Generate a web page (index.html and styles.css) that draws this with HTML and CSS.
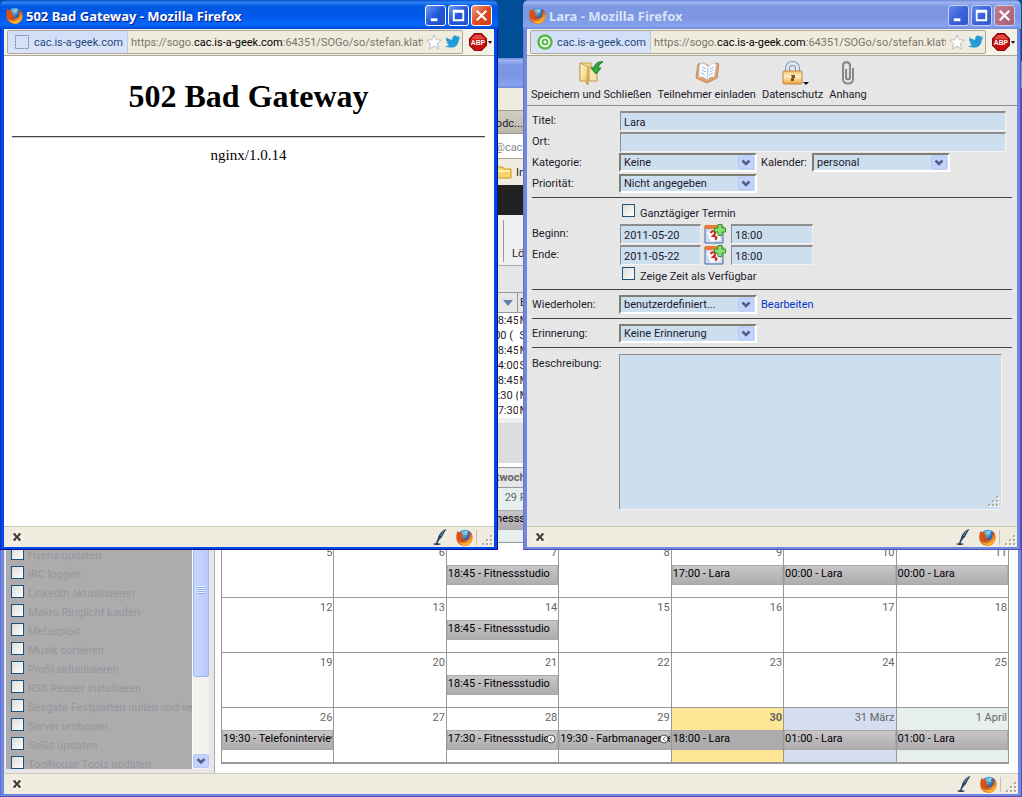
FILE: index.html
```html
<!DOCTYPE html>
<html lang="de">
<head>
<meta charset="utf-8">
<title>Lara - Mozilla Firefox</title>
<link rel="stylesheet" href="styles.css">
</head>
<body>
<svg class="defs" aria-hidden="true">
  <defs>
    <radialGradient id="globe" cx=".4" cy=".25" r=".8"><stop offset="0" stop-color="#7fd0f5"/><stop offset=".5" stop-color="#2268b5"/><stop offset="1" stop-color="#0b2868"/></radialGradient>
    <linearGradient id="fur" x1="0" y1="0" x2="1" y2="1"><stop offset="0" stop-color="#d9581a"/><stop offset=".5" stop-color="#d64c14"/><stop offset=".8" stop-color="#f9a52c"/><stop offset="1" stop-color="#b93c10"/></linearGradient>
    <linearGradient id="gold" x1="0" y1="0" x2="1" y2="1"><stop offset="0" stop-color="#fffbe0"/><stop offset=".6" stop-color="#f3d98c"/><stop offset="1" stop-color="#cf9a3c"/></linearGradient>
    <linearGradient id="lockfill" x1="0" y1="0" x2="0" y2="1"><stop offset="0" stop-color="#f4bd68"/><stop offset=".4" stop-color="#fff0c8"/><stop offset="1" stop-color="#eda136"/></linearGradient>
  </defs>
  <symbol id="firefox" viewBox="0 0 16 16">
    <circle cx="8.3" cy="7.6" r="7" fill="url(#globe)"/>
    <path d="M8 2.2c1.500-.8 3-.4 3.600.4l-1.600.8.8 1.400-2 .8z" fill="#8fd2ee"/>
    <path d="M1.500 1.500c.3 1 .8 1.400 1.400 1.700C4 2.400 5 2.500 5.800 2.800 5.200 3.500 5 4.200 5.200 4.800l1.900.3c.1.800-1.200 1.100-1.500 1.600.1 1 .7 1.400 1.600 1.500.9 0 1.600-.6 2.300-.1-.7 1.700-3 2.400-4.500 1.200 1.900 2.500 6.300 2 7.300-1.300.5-1.700.1-3.300-.5-4.400.9.500 1.400 1.200 1.700 2-.1-1.800-.9-3-1.700-3.900 2.600 1.300 4 4 3.900 6.700C15.500 12.700 12.400 16 8.200 16 3.900 16 .4 12.800.3 8.500.2 5.900.6 3.500 1.500 1.500z" fill="url(#fur)"/>
    <path d="M1.300 9.500c1.200 3.500 4.700 4.800 8 4 2-.5 3.600-1.800 4.300-3.600-.2 3-2.700 5-5.700 5-3.400 0-5.900-2.200-6.600-5.400z" fill="#ffc637"/>
  </symbol>
  <symbol id="minimize" viewBox="0 0 20 20"><path d="M5 13h7v3H5z" fill="#fff"/></symbol>
  <symbol id="maximize" viewBox="0 0 20 20"><path d="M4 4h12v12H4zM6 7v7h8V7z" fill="#fff" fill-rule="evenodd"/></symbol>
  <symbol id="close" viewBox="0 0 20 20"><path d="M5 5l10 10M15 5L5 15" stroke="#fff" stroke-width="2.300"/></symbol>
  <symbol id="star" viewBox="0 0 16 16"><path d="M8 .8l2.100 4.900 5.300.5-4 3.500 1.200 5.300L8 12.200 3.400 15l1.200-5.300-4-3.500 5.300-.5z" fill="#fff" stroke="#bdbdbd"/></symbol>
  <symbol id="bird" viewBox="0 0 16 14"><path d="M1 2c2 2 4 2.700 6.200 2.700C7 1.600 9 .2 11 .7c1 .2 1.500.7 1.900 1.100l2.200-.7-1.300 2 1.700-.2-1.700 1.800c0 4-2.900 7.900-7.200 7.900C4 12.600 2 12 0 11c2 0 3.200-.5 4.300-1.300C2.800 9.400 2 8.600 1.700 7.500h1.500C1.500 6.500.9 5.200 1 3.900l1.200.3C1.100 3.500.8 2.700 1 2z" fill="#239bd3"/></symbol>
  <symbol id="abp" viewBox="0 0 16 16"><path d="M5 .5h6L15.500 5v6L11 15.500H5L.5 11V5z" fill="#c70d0d" stroke="#8c0c0c"/><path d="M5.500 1.500h5l4 4h-13z" fill="#e04b45"/><text x="8" y="11" text-anchor="middle" class="abp-text">ABP</text></symbol>
  <symbol id="arrow" viewBox="0 0 16 14"><rect x=".5" y=".5" width="15" height="13" rx="1.500" fill="#c3d3fd" stroke="#b3c8f8"/><path d="M4.500 5L8 8.500 11.500 5" fill="none" stroke="#4d6185" stroke-width="2.500"/></symbol>
  <symbol id="cross" viewBox="0 0 16 16"><circle cx="8" cy="8" r="7" fill="#f6eee4"/><path d="M5 5l6 6M11 5l-6 6" stroke="#3b3b33" stroke-width="1.800"/><path d="M4 5h3M9 5h3M4 11h3M9 11h3" stroke="#3b3b33"/></symbol>
  <symbol id="pen" viewBox="0 0 16 18"><path d="M14.500 1C10 2 7 6 6 10l-2 5h1.500l2-3.500L10 9l2-4z" fill="#23405c"/><path d="M8.500 8l3-5" stroke="#7295b2"/><path d="M1 16c3-1.500 5-1 8 0-2 1.300-6 1.300-8 0z" fill="#23405c"/></symbol>
  <symbol id="grip" viewBox="0 0 12 12"><path d="M9 1h2v2H9zM9 5h2v2H9zM5 5h2v2H5zM9 9h2v2H9zM5 9h2v2H5zM1 9h2v2H1z" fill="#fff"/><path d="M8 0h2v2H8zM8 4h2v2H8zM4 4h2v2H4zM8 8h2v2H8zM4 8h2v2H4zM0 8h2v2H0z" fill="#b0ab9a"/></symbol>
  <symbol id="dategrid" viewBox="0 0 22 20"><path d="M1 2h18v17H1z" fill="#d3daf0" stroke="#4169a8"/><path d="M1 1h18v4H1z" fill="#ef7a33"/><path d="M3 8l10-2 4 10-10 2z" fill="#fff"/><path d="M6.500 9c2-3 6-1.500 4.500 1l-2 2c3 0 5 2 2 3.500" fill="none" stroke="#d3201d" stroke-width="2"/><path d="M14 .5h4V4h3.500v4H18v3.500h-4V8h-3.500V4H14z" fill="#8ddd70" stroke="#259832"/></symbol>
  <symbol id="clock" viewBox="0 0 10 10"><circle cx="5" cy="5" r="4" fill="#fff" stroke="#555"/><path d="M6.500 3L4 5l2.500 2" fill="none" stroke="#777"/></symbol>
</svg>

<div class="desktop">

<section class="window main-window">
  <div class="titlebar main-title"></div>
  <div class="main-body">
    <div class="browser-top">
      <div class="menu-strip"></div>
      <div class="tab-strip"><span class="tab">Podc...</span></div>
      <div class="address-strip"><span>@cac.</span></div>
      <div class="bookmark-strip"><svg width="16" height="14" viewBox="0 0 16 14"><path d="M1 2h6l1 2h7v9H1z" fill="#f6d66b" stroke="#c99b28"/><path d="M2 5h12v2H2z" fill="#fff0aa"/></svg><span>In</span></div>
      <div class="black-strip"></div>
    </div>
    <div class="workspace">
      <aside class="sidebar">
        <ul class="tasks">
          <li><input type="checkbox" id="t1"><label for="t1">Hyena updaten</label></li>
          <li><input type="checkbox" id="t2"><label for="t2">IRC loggen</label></li>
          <li><input type="checkbox" id="t3"><label for="t3">LinkedIn aktualisieren</label></li>
          <li><input type="checkbox" id="t4"><label for="t4">Makro Ringlicht kaufen</label></li>
          <li><input type="checkbox" id="t5"><label for="t5">Metasploit</label></li>
          <li><input type="checkbox" id="t6"><label for="t6">Musik sortieren</label></li>
          <li><input type="checkbox" id="t7"><label for="t7">Profil aktualisieren</label></li>
          <li><input type="checkbox" id="t8"><label for="t8">RSS Reader installieren</label></li>
          <li><input type="checkbox" id="t9"><label for="t9">Seagate Festplatten nullen und verkaufen</label></li>
          <li><input type="checkbox" id="t10"><label for="t10">Server umbauen</label></li>
          <li><input type="checkbox" id="t11"><label for="t11">SoGo updaten</label></li>
          <li><input type="checkbox" id="t12"><label for="t12">Toolhouse Tools updaten</label></li>
        </ul>
        <div class="scrollbar">
          <div class="thumb"><i></i></div>
          <button class="scroll-down" aria-label="Nach unten"><svg width="16" height="16" viewBox="0 0 16 14"><use href="#arrow"/></svg></button>
        </div>
      </aside>
      <main class="content">
        <div class="tools"><button class="delete"><svg width="24" height="24" viewBox="0 0 24 24"><path d="M6 6l12 12M18 6L6 18" stroke="#d3201d" stroke-width="4"/></svg>Löschen</button></div>
        <div class="filter"></div>
        <table class="events">
          <thead><tr><th><svg width="10" height="6" viewBox="0 0 10 6"><path d="M0 0h10L5 6z" fill="#5d83ae"/></svg></th><th>E</th></tr></thead>
          <tbody>
            <tr><td>18:45</td><td>M</td></tr>
            <tr><td>:00 (</td><td>S</td></tr>
            <tr><td>18:45</td><td>M</td></tr>
            <tr><td>14:00</td><td>S</td></tr>
            <tr><td>18:45</td><td>M</td></tr>
            <tr><td>7:30 (</td><td>M</td></tr>
            <tr><td>17:30</td><td>M</td></tr>
          </tbody>
        </table>
        <div class="view-switch"></div>
        <table class="month">
          <thead><tr><th></th><th></th><th>Mittwoch</th><th></th><th></th><th></th><th></th></tr></thead>
          <tbody>
            <tr><td></td><td></td><td class="other"><b class="day">29 Februar</b><span class="event">18:45 - Fitnessstudio</span></td><td></td><td></td><td></td><td></td></tr>
            <tr><td><b class="day">5</b></td><td><b class="day">6</b></td><td><b class="day">7</b><span class="event">18:45 - Fitnessstudio</span></td><td><b class="day">8</b></td><td><b class="day">9</b><span class="event">17:00 - Lara</span></td><td><b class="day">10</b><span class="event">00:00 - Lara</span></td><td><b class="day">11</b><span class="event">00:00 - Lara</span></td></tr>
            <tr><td><b class="day">12</b></td><td><b class="day">13</b></td><td><b class="day">14</b><span class="event">18:45 - Fitnessstudio</span></td><td><b class="day">15</b></td><td><b class="day">16</b></td><td><b class="day">17</b></td><td><b class="day">18</b></td></tr>
            <tr><td><b class="day">19</b></td><td><b class="day">20</b></td><td><b class="day">21</b><span class="event">18:45 - Fitnessstudio</span></td><td><b class="day">22</b></td><td><b class="day">23</b></td><td><b class="day">24</b></td><td><b class="day">25</b></td></tr>
            <tr><td><b class="day">26</b><span class="event">19:30 - Telefoninterview</span></td><td><b class="day">27</b></td><td><b class="day">28</b><span class="event">17:30 - Fitnessstudio<svg class="clock"><use href="#clock"/></svg></span></td><td><b class="day">29</b><span class="event">19:30 - Farbmanagement<svg class="clock"><use href="#clock"/></svg></span></td><td class="today"><b class="day">30</b><span class="event plain">18:00 - Lara</span></td><td class="selected"><b class="day">31 März</b><span class="event">01:00 - Lara</span></td><td class="other"><b class="day">1 April</b><span class="event">01:00 - Lara</span></td></tr>
          </tbody>
        </table>
      </main>
    </div>
    <footer class="status"><button aria-label="Schließen"><svg width="16" height="16"><use href="#cross"/></svg></button><span class="spacer"></span><svg width="16" height="18"><use href="#pen"/></svg><svg class="fox" width="17" height="17"><use href="#firefox"/></svg><i class="divider"></i><svg class="grip"><use href="#grip"/></svg></footer>
  </div>
</section>

<section class="window active gateway">
  <header class="titlebar"><svg width="17" height="17"><use href="#firefox"/></svg><span class="title">502 Bad Gateway - Mozilla Firefox</span><button class="caption" aria-label="Minimieren"><svg><use href="#minimize"/></svg></button><button class="caption" aria-label="Maximieren"><svg><use href="#maximize"/></svg></button><button class="caption shut" aria-label="Schließen"><svg><use href="#close"/></svg></button></header>
  <div class="window-body">
    <div class="navbar">
      <div class="address"><button class="identity"><svg width="16" height="16" viewBox="0 0 16 16"><path d="M1.500 1.500h13v13h-13z" fill="none" stroke="#7185a3" stroke-dasharray="2 1"/></svg>cac.is-a-geek.com</button><div class="url" role="textbox">https://sogo.<b>cac.is-a-geek.com</b>:64351/SOGo/so/stefan.klattenhoff</div><svg width="16" height="16"><use href="#star"/></svg><svg width="16" height="14"><use href="#bird"/></svg></div>
      <button class="abp" aria-label="Adblock Plus"><svg width="18" height="18"><use href="#abp"/></svg><i></i></button>
    </div>
    <div class="error-page"><h1>502 Bad Gateway</h1><hr><p>nginx/1.0.14</p></div>
    <footer class="status"><button aria-label="Schließen"><svg width="16" height="16"><use href="#cross"/></svg></button><span class="spacer"></span><svg width="16" height="18"><use href="#pen"/></svg><svg class="fox" width="17" height="17"><use href="#firefox"/></svg><i class="divider"></i><svg class="grip"><use href="#grip"/></svg></footer>
  </div>
</section>

<section class="window editor">
  <header class="titlebar"><svg width="17" height="17"><use href="#firefox"/></svg><span class="title">Lara - Mozilla Firefox</span><button class="caption" aria-label="Minimieren"><svg><use href="#minimize"/></svg></button><button class="caption" aria-label="Maximieren"><svg><use href="#maximize"/></svg></button><button class="caption shut" aria-label="Schließen"><svg><use href="#close"/></svg></button></header>
  <div class="window-body">
    <div class="navbar">
      <div class="address"><button class="identity"><svg width="16" height="16" viewBox="0 0 16 16"><circle cx="8" cy="8" r="6.500" fill="#fff" stroke="#5aba47" stroke-width="2.500"/><circle cx="8" cy="8" r="2.500" fill="#fff" stroke="#5aba47" stroke-width="2"/></svg>cac.is-a-geek.com</button><div class="url" role="textbox">https://sogo.<b>cac.is-a-geek.com</b>:64351/SOGo/so/stefan.klattenhoff</div><svg width="16" height="16"><use href="#star"/></svg><svg width="16" height="14"><use href="#bird"/></svg></div>
      <button class="abp" aria-label="Adblock Plus"><svg width="18" height="18"><use href="#abp"/></svg><i></i></button>
    </div>
    <div class="toolbar">
      <button><svg viewBox="0 0 24 24"><path d="M1 2h11v17H1z" fill="#f4d88c" stroke="#d0a050"/><path d="M10 6h8v14h-8z" fill="#f7e5af" stroke="#c4944a"/><path d="M1 2l8 4v18l-3-4H1z" fill="url(#gold)" stroke="#c89a48"/><path d="M24 1c-5-1-8 2-9 6h-3l5 6 5-6h-3c1-3 2-5 5-6z" fill="#34aa40" stroke="#168027"/></svg>Speichern und Schließen</button>
      <button><svg viewBox="0 0 24 24"><path d="M3 3L1 17l11 5 10-5 2-14-4-1-6 3-6-3z" fill="#dfa06a" stroke="#c88a5c"/><path d="M5 3c3-1 6 0 8 3 3-3 5-4 8-3l-2 13c-3-1-5 0-7 3-2-3-5-4-8-3z" fill="#fff" stroke="#d4e2ee"/><path d="M7 6l4 2M7 9l4 2M6 12l4 2M15 8l4-2M15 11l3-2M14 14l4-2" stroke="#8db4dd"/><path d="M13 6l-1 13" stroke="#a9bfd5"/></svg>Teilnehmer einladen</button>
      <button class="has-menu"><svg viewBox="0 0 24 24"><path d="M6.500 12V7c0-6 10-6 10 0v5" fill="none" stroke="#8295ab" stroke-width="5"/><path d="M6.500 12V7c0-6 10-6 10 0v5" fill="none" stroke="#dce7f1" stroke-width="3"/><rect x="2" y="10" width="19" height="13" rx="1" fill="url(#lockfill)" stroke="#be8749"/><path d="M10 14h4v3h-1v3h-3v-3h1z" fill="#805223"/></svg><i></i>Datenschutz</button>
      <button><svg viewBox="0 0 24 24"><path d="M10 8v8c0 3 4 3 4 0V5c0-5-7-5-7 0v13c0 6 10 6 10 0V7" fill="none" stroke="#666" stroke-width="2"/><path d="M10 8v8c0 3 4 3 4 0V5c0-5-7-5-7 0v13c0 6 10 6 10 0V7" fill="none" stroke="#aaa" stroke-width="1"/></svg>Anhang</button>
    </div>
    <form class="form">
      <div class="group">
        <div class="row"><label for="titel">Titel:</label><input class="field wide" id="titel" value="Lara"></div>
        <div class="row"><label for="ort">Ort:</label><input class="field wide" id="ort"></div>
        <div class="row"><label for="kat">Kategorie:</label><span class="select"><select id="kat"><option>Keine</option></select><svg><use href="#arrow"/></svg></span><label class="side" for="kal">Kalender:</label><span class="select"><select id="kal"><option>personal</option></select><svg><use href="#arrow"/></svg></span></div>
        <div class="row"><label for="prio">Priorität:</label><span class="select"><select id="prio"><option>Nicht angegeben</option></select><svg><use href="#arrow"/></svg></span></div>
      </div>
      <div class="group dates">
        <div class="row check"><input type="checkbox" id="ganz"><label for="ganz">Ganztägiger Termin</label></div>
        <div class="row"><label for="beginn">Beginn:</label><input class="field date" id="beginn" value="2011-05-20"><button type="button" class="pickdate" aria-label="Datum wählen"><svg width="22" height="20"><use href="#dategrid"/></svg></button><input class="field time" aria-label="Beginn Uhrzeit" value="18:00"></div>
        <div class="row"><label for="ende">Ende:</label><input class="field date" id="ende" value="2011-05-22"><button type="button" class="pickdate" aria-label="Datum wählen"><svg width="22" height="20"><use href="#dategrid"/></svg></button><input class="field time" aria-label="Ende Uhrzeit" value="18:00"></div>
        <div class="row check"><input type="checkbox" id="frei"><label for="frei">Zeige Zeit als Verfügbar</label></div>
      </div>
      <div class="group single"><div class="row"><label for="wdh">Wiederholen:</label><span class="select"><select id="wdh"><option>benutzerdefiniert...</option></select><svg><use href="#arrow"/></svg></span><a class="side" href="#">Bearbeiten</a></div></div>
      <div class="group single"><div class="row"><label for="eri">Erinnerung:</label><span class="select"><select id="eri"><option>Keine Erinnerung</option></select><svg><use href="#arrow"/></svg></span></div></div>
      <div class="row description"><label for="text">Beschreibung:</label><div class="area"><textarea id="text"></textarea><svg class="grip"><use href="#grip"/></svg></div></div>
    </form>
    <footer class="status"><button aria-label="Schließen"><svg width="16" height="16"><use href="#cross"/></svg></button><span class="spacer"></span><svg width="16" height="18"><use href="#pen"/></svg><svg class="fox" width="17" height="17"><use href="#firefox"/></svg><i class="divider"></i><svg class="grip"><use href="#grip"/></svg></footer>
  </div>
</section>
</div>
</body>
</html>
```

FILE: styles.css
```css
* { box-sizing: border-box; }
body, button, input, select, textarea { font: 11px/15px Roboto, "Noto Sans", sans-serif; color: #1c1c2c; }
body { margin: 0; }
button { padding: 0; border: 0; background: none; }
svg { display: block; flex: none; }
.defs { position: absolute; width: 0; height: 0; }
.desktop { position: relative; min-height: 100vh; overflow: hidden; background: #004e98; }

/* Window frames */
.window { position: absolute; display: flex; flex-direction: column; padding: 0 4px 3px; background: #7088dd; box-shadow: inset -1px -1px #5050b8, inset 1px 0 #6574cf; border-radius: 6px 6px 0 0; }
.active { background: #0048e8; box-shadow: inset -1px -1px #00138c, inset 1px 0 #0030c8; }
.main-window { top: 58px; left: 0; right: 0; bottom: 0; }
.gateway { top: 0; left: 0; width: 498px; height: 550px; }
.editor { top: 0; left: 523px; width: 498px; height: 550px; }
.titlebar { display: flex; align-items: center; flex: none; gap: 2px; height: 29px; padding: 2px 6px 0; margin: 0 -4px; color: #d8e4f8; border-radius: 6px 6px 0 0; background: linear-gradient(#6f86db, #9eb5f2 8%, #7d97e2 22%, #7c96e2 60%, #86a3ee 90%, #7089da); }
.active .titlebar { color: #fff; background: linear-gradient(#0a4fc4, #2b83f8 8%, #0058e0 22%, #0059ea 55%, #0567fc 85%, #0046d0); }
.title { flex: 1; margin-left: 1px; font: bold 13px/18px "Noto Sans", sans-serif; white-space: nowrap; }
.active .title { text-shadow: 1px 1px #0a1883; }
.caption { width: 21px; height: 21px; border: 1px solid #c4d0f5; border-radius: 3px; background: linear-gradient(135deg, #6489ea, #3b63d8 50%, #3158c8); }
.caption svg { width: 19px; height: 19px; }
.active .caption { border-color: #fff; background: linear-gradient(135deg, #6c9af5, #2357da 50%, #2050cc); }
.caption.shut { background: linear-gradient(135deg, #c0808c, #a85c70); }
.active .caption.shut { background: linear-gradient(135deg, #f09a7c, #e04a23 50%, #cf3c15); }
.window-body, .main-body { display: flex; flex: 1; flex-direction: column; min-height: 0; background: #fff; }
.editor .window-body { background: #e6e6e6; }

/* Address bar */
.navbar { display: flex; align-items: center; flex: none; height: 27px; padding: 0 3px; background: #f4f1e7; border-bottom: 1px solid #aaa797; }
.address { display: flex; align-items: center; flex: 1; gap: 3px; min-width: 0; height: 24px; padding-right: 1px; border: 1px solid #aca899; border-radius: 2px; background: #efebde; }
.identity { display: flex; align-items: center; flex: none; gap: 4px; width: 120px; height: 22px; padding-left: 6px; color: #234a7d; background: linear-gradient(#cfdef7, #dbe4f8); border-right: 1px solid #b9c9e8; }
.url { flex: 1; min-width: 0; overflow: hidden; color: #777668; white-space: nowrap; }
.url b { font-weight: normal; color: #000; }
.abp { display: flex; align-items: center; gap: 1px; width: 28px; padding-left: 6px; }
.abp-text { font: bold 6px "Liberation Sans", sans-serif; fill: #fff; }
.abp i, .has-menu i { border: 2px solid transparent; border-top: 3px solid #111; border-bottom: 0; }

.status { display: flex; align-items: center; flex: none; height: 21px; padding-left: 5px; background: #efebde; border-top: 1px solid #cfcab8; }
.spacer { flex: 1; }
.status .fox { margin-left: 8px; }
.divider { width: 1px; height: 15px; margin: 0 5px 0 3px; background: #c8c4b4; }
.grip { width: 12px; height: 12px; align-self: flex-end; }

/* Gateway error */
.error-page { flex: 1; padding: 21px 9px 0 8px; text-align: center; color: #000; font: 16px/19px "Liberation Serif", serif; }
.error-page h1 { margin: 0; font-size: 32px; line-height: 39px; }
.error-page hr { height: 2px; margin: 20px 0 8px; border: 0; border-top: 1px solid #444; border-bottom: 1px solid #ccc; }
.error-page p { margin: 0; font-size: 15px; }

/* Appointment editor */
.toolbar { display: flex; flex: none; gap: 6px; height: 50px; padding: 5px 4px 0; border-bottom: 1px solid #8e8e8e; }
.toolbar button { position: relative; display: flex; flex-direction: column; align-items: center; gap: 2px; white-space: nowrap; }
.toolbar svg { width: 24px; height: 24px; }
.has-menu i { position: absolute; top: 21px; right: 14px; border-width: 3px 3px 0; }
.form { flex: 1; padding: 4px 5px 0; }
.group { padding-bottom: 3px; border-bottom: 1px solid #444; }
.row { display: flex; align-items: center; height: 21px; }
.row > label:first-child { width: 88px; }
.field { height: 20px; padding: 2px 3px 0; border: 1px solid #f2f2f2; border-top: 2px solid #8d8d8d; border-left: 1px solid #8d8d8d; background: #cddeee; }
.wide { flex: 1; min-width: 0; margin-right: 6px; }
.select { position: relative; width: 138px; height: 19px; margin-left: -1px; border: 2px solid #fff; border-top-color: #7f7d70; border-left-color: #7f7d70; background: #cddeee; }
.select select { display: block; width: 100%; height: 15px; padding: 0 18px 0 3px; border: 0; background: transparent; appearance: none; }
.select svg { position: absolute; top: 0; right: 1px; width: 16px; height: 15px; pointer-events: none; }
.side { margin-left: 4px; }
label.side { width: 52px; }
a { color: #0033cc; text-decoration: none; }
.dates { padding: 4px 0 3px; }
.row.check { padding-left: 90px; gap: 5px; align-items: flex-start; padding-top: 2px; }
.row.check > label { width: auto; padding-top: 2px; }
input[type="checkbox"] { flex: none; width: 13px; height: 13px; margin: 0; border: 1px solid #1c5180; appearance: none; background: linear-gradient(135deg, #dcdcd7, #fff); }
.date { width: 81px; }
.pickdate { width: 22px; margin: 0 5px 0 3px; }
.time { width: 82px; }
.group.single { padding: 4px 0 3px; }
.description { align-items: flex-start; height: 162px; padding-top: 6px; }
.description label { padding-top: 2px; }
.area { position: relative; flex: 1; height: 156px; margin: 0 10px 0 -1px; }
.area textarea { display: block; width: 100%; height: 100%; border: 1px solid #f2f2f2; border-top-color: #8d8d8d; border-left-color: #8d8d8d; resize: none; background: #cddeee; }
.area .grip { position: absolute; right: 2px; bottom: 2px; }

/* Main calendar window */
.main-title { height: 30px; }
.browser-top { flex: none; background: #efebde; }
.menu-strip { height: 22px; }
.tab-strip { height: 24px; padding: 5px 0 0 485px; border-top: 1px solid #9a978c; border-bottom: 1px solid #9a978c; background: linear-gradient(#d2cec2, #bab6aa); }
.address-strip { height: 24px; padding: 6px 0 0 491px; color: #888; background: #fff; }
.bookmark-strip { display: flex; gap: 4px; height: 27px; padding: 6px 0 0 492px; border-top: 1px solid #aaa797; }
.black-strip { height: 30px; background: #222; }
.workspace { display: flex; flex: 1; min-height: 0; }
.sidebar { display: flex; flex: none; width: 211px; padding: 0 5px 4px 2px; background: #e6e6e6; border-right: 1px solid #aaa; }
.tasks { flex: 1; min-width: 0; height: 100%; margin: 0; padding: 329px 0 0 5px; overflow: hidden; list-style: none; background: #adabae; }
.tasks li { display: flex; align-items: center; gap: 4px; height: 19px; white-space: nowrap; }
.tasks label { padding-top: 4px; color: #98969a; }
.scrollbar { display: flex; flex-direction: column; width: 17px; background: #f3f2ee; border-left: 1px solid #fff; }
.thumb { flex: 1; margin-bottom: 76px; border: 1px solid #9db8f0; border-radius: 2px; background: linear-gradient(90deg, #c9d8fd, #b6c9fb); }
.thumb i { display: block; width: 7px; height: 8px; margin: 370px auto 0; background: repeating-linear-gradient(#eef4fe 0 1px, #8cb0f8 1px 2px); }
.scroll-down { height: 16px; }
.content { flex: 1; min-width: 0; background: #fff; }
.tools { height: 51px; padding: 5px 0 0 288px; border-bottom: 1px solid #aaa; background: #f0f0f0; }
.delete { display: flex; flex-direction: column; align-items: center; gap: 2px; height: 42px; padding-left: 8px; border-left: 1px solid #999; }
.filter { height: 26px; background: #e6e6e6; }
.events { width: 100%; border-collapse: collapse; table-layout: fixed; }
.events th, .events td { height: 15px; padding: 0 0 0 2px; overflow: hidden; font-weight: normal; text-align: left; white-space: nowrap; }
.events th { height: 20px; background: #e6e6e6; border: 1px solid #999; }
.events th:first-child { width: 302px; padding-left: 287px; }
.events td:first-child { padding-left: 276px; }
.view-switch { height: 49px; border-top: 5px solid #eee; border-bottom: 4px solid #fff; background: #dcdcdc; }
.month { width: calc(100% - 15px); margin-left: 6px; border-collapse: collapse; table-layout: fixed; border-bottom: 2px solid #999; }
.month th { height: 20px; padding: 0; color: #666; background: #e6e6e6; border: 1px solid #999; }
.month td { height: 55px; padding: 0; vertical-align: top; border: 1px solid #999; }
.day { display: block; height: 22px; padding: 2px 1px 0 0; color: #666; font-weight: normal; text-align: right; }
.event { position: relative; display: block; height: 20px; overflow: hidden; color: #000; border: 1px solid #aaa8ab; background: linear-gradient(#c8c6c9, #aeacaf); white-space: nowrap; line-height: 15px; }
.plain { background: #adabae; }
.clock { position: absolute; top: 3px; right: 1px; width: 10px; height: 10px; }
.today { background: #ffe696; }
.today .day { font-weight: bold; }
.selected { background: #d5deef; }
.other { background: #e6efee; }
```
